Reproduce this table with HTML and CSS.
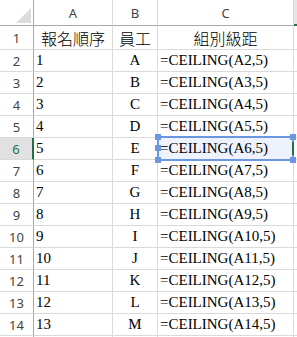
FILE: index.html
```html
<!DOCTYPE html>
<html>
<head>
<meta charset="utf-8">
<link rel="stylesheet" href="styles.css">
</head>
<body>
<div class="sheet">
  <div class="hd corner"><svg class="tri" width="15" height="15" viewBox="0 0 15 15"><polygon points="15,0 15,15 0,15" fill="#dcdcdc"/></svg></div>
  <div class="hd col">A</div>
  <div class="hd col">B</div>
  <div class="hd col">C</div>
  <div class="hd col dcol"></div>

  <div class="hd rn">1</div>
  <div class="c cjk ctr">報名順序</div>
  <div class="c cjk ctr">員工</div>
  <div class="c cjk ctr">組別級距</div>
  <div class="c d"></div>

  <div class="hd rn">2</div><div class="c">1</div><div class="c ctr">A</div><div class="c">=CEILING(A2,5)</div><div class="c d"></div>
  <div class="hd rn">3</div><div class="c">2</div><div class="c ctr">B</div><div class="c">=CEILING(A3,5)</div><div class="c d"></div>
  <div class="hd rn">4</div><div class="c">3</div><div class="c ctr">C</div><div class="c">=CEILING(A4,5)</div><div class="c d"></div>
  <div class="hd rn">5</div><div class="c">4</div><div class="c ctr">D</div><div class="c">=CEILING(A5,5)</div><div class="c d"></div>
  <div class="hd rn act">6</div><div class="c">5</div><div class="c ctr">E</div><div class="c sel">=CEILING(A6,5)<span class="selbox"><i class="h tl"></i><i class="h ml"></i><i class="h bl"></i><i class="h tr"></i><i class="h br"></i><i class="gbar"></i></span></div><div class="c d"></div>
  <div class="hd rn">7</div><div class="c">6</div><div class="c ctr">F</div><div class="c">=CEILING(A7,5)</div><div class="c d"></div>
  <div class="hd rn">8</div><div class="c">7</div><div class="c ctr">G</div><div class="c">=CEILING(A8,5)</div><div class="c d"></div>
  <div class="hd rn">9</div><div class="c">8</div><div class="c ctr">H</div><div class="c">=CEILING(A9,5)</div><div class="c d"></div>
  <div class="hd rn">10</div><div class="c">9</div><div class="c ctr">I</div><div class="c">=CEILING(A10,5)</div><div class="c d"></div>
  <div class="hd rn">11</div><div class="c">10</div><div class="c ctr">J</div><div class="c">=CEILING(A11,5)</div><div class="c d"></div>
  <div class="hd rn">12</div><div class="c">11</div><div class="c ctr">K</div><div class="c">=CEILING(A12,5)</div><div class="c d"></div>
  <div class="hd rn">13</div><div class="c">12</div><div class="c ctr">L</div><div class="c">=CEILING(A13,5)</div><div class="c d"></div>
  <div class="hd rn">14</div><div class="c">13</div><div class="c ctr">M</div><div class="c">=CEILING(A14,5)</div><div class="c d"></div>
  <div class="hd rn"></div><div class="c"></div><div class="c"></div><div class="c"></div><div class="c d"></div>
</div>
</body>
</html>
```

FILE: styles.css
```css
html, body {
  margin: 0;
  padding: 0;
  background: #ffffff;
}
.sheet {
  display: grid;
  grid-template-columns: 34px 79px 45px 136px 20px;
  grid-template-rows: 26px 24px repeat(14, 22px);
  width: 297px;
  height: 337px;
  overflow: hidden;
}
.hd {
  font-family: "Noto Sans", "Liberation Sans", sans-serif;
  font-size: 13px;
  color: #444444;
  background: #ffffff;
  display: flex;
  align-items: center;
  justify-content: center;
  border-right: 1px solid #d8d8d8;
  border-bottom: 1px solid #d8d8d8;
}
.corner {
  align-items: flex-end;
  justify-content: flex-end;
  border-right: 1px solid #a8a8a8;
  border-bottom: 1px solid #a8a8a8;
}
.tri {
  margin: 0 2px 2px 0;
}
.col {
  border-bottom: 1px solid #a8a8a8;
  border-right: 1px solid #dadada;
  padding-top: 1px;
}
.dcol {
  background: #e6e6e6;
  border-bottom: 2px solid #217346;
}
.rn {
  border-right: 1px solid #a8a8a8;
  border-bottom: 1px solid #dadada;
  padding-top: 1px;
}
.rn.act {
  background: #e1e1e1;
  color: #217346;
  border-right: 2px solid #217346;
}
.c {
  font-family: "Liberation Serif", "Noto Sans CJK TC", serif;
  font-size: 15px;
  color: #000000;
  border-right: 1px solid #dadada;
  border-bottom: 1px solid #dadada;
  display: flex;
  align-items: flex-end;
  padding: 0 0 2px 2px;
  line-height: 17px;
  white-space: nowrap;
}
.ctr {
  justify-content: center;
  padding-left: 0;
}
.cjk {
  font-family: "Noto Sans CJK TC", sans-serif;
  font-size: 16px;
  font-weight: 300;
  line-height: 20px;
  padding-bottom: 1px;
}
.sel {
  position: relative;
  background: #eef2fc;
}
.selbox {
  position: absolute;
  left: -1px;
  top: -2px;
  right: -1px;
  bottom: -2px;
  border: 2px solid #6c97e0;
}
.h {
  position: absolute;
  width: 6px;
  height: 6px;
  background: #6c97e0;
}
.tl { left: -4px; top: -4px; }
.ml { left: -4px; top: 7px; height: 6px; }
.bl { left: -4px; bottom: -4px; }
.tr { right: -4px; top: -4px; }
.br { right: -4px; bottom: -4px; }
.gbar {
  position: absolute;
  right: -2px;
  top: 4px;
  width: 2px;
  height: 13px;
  background: #217346;
}
```
